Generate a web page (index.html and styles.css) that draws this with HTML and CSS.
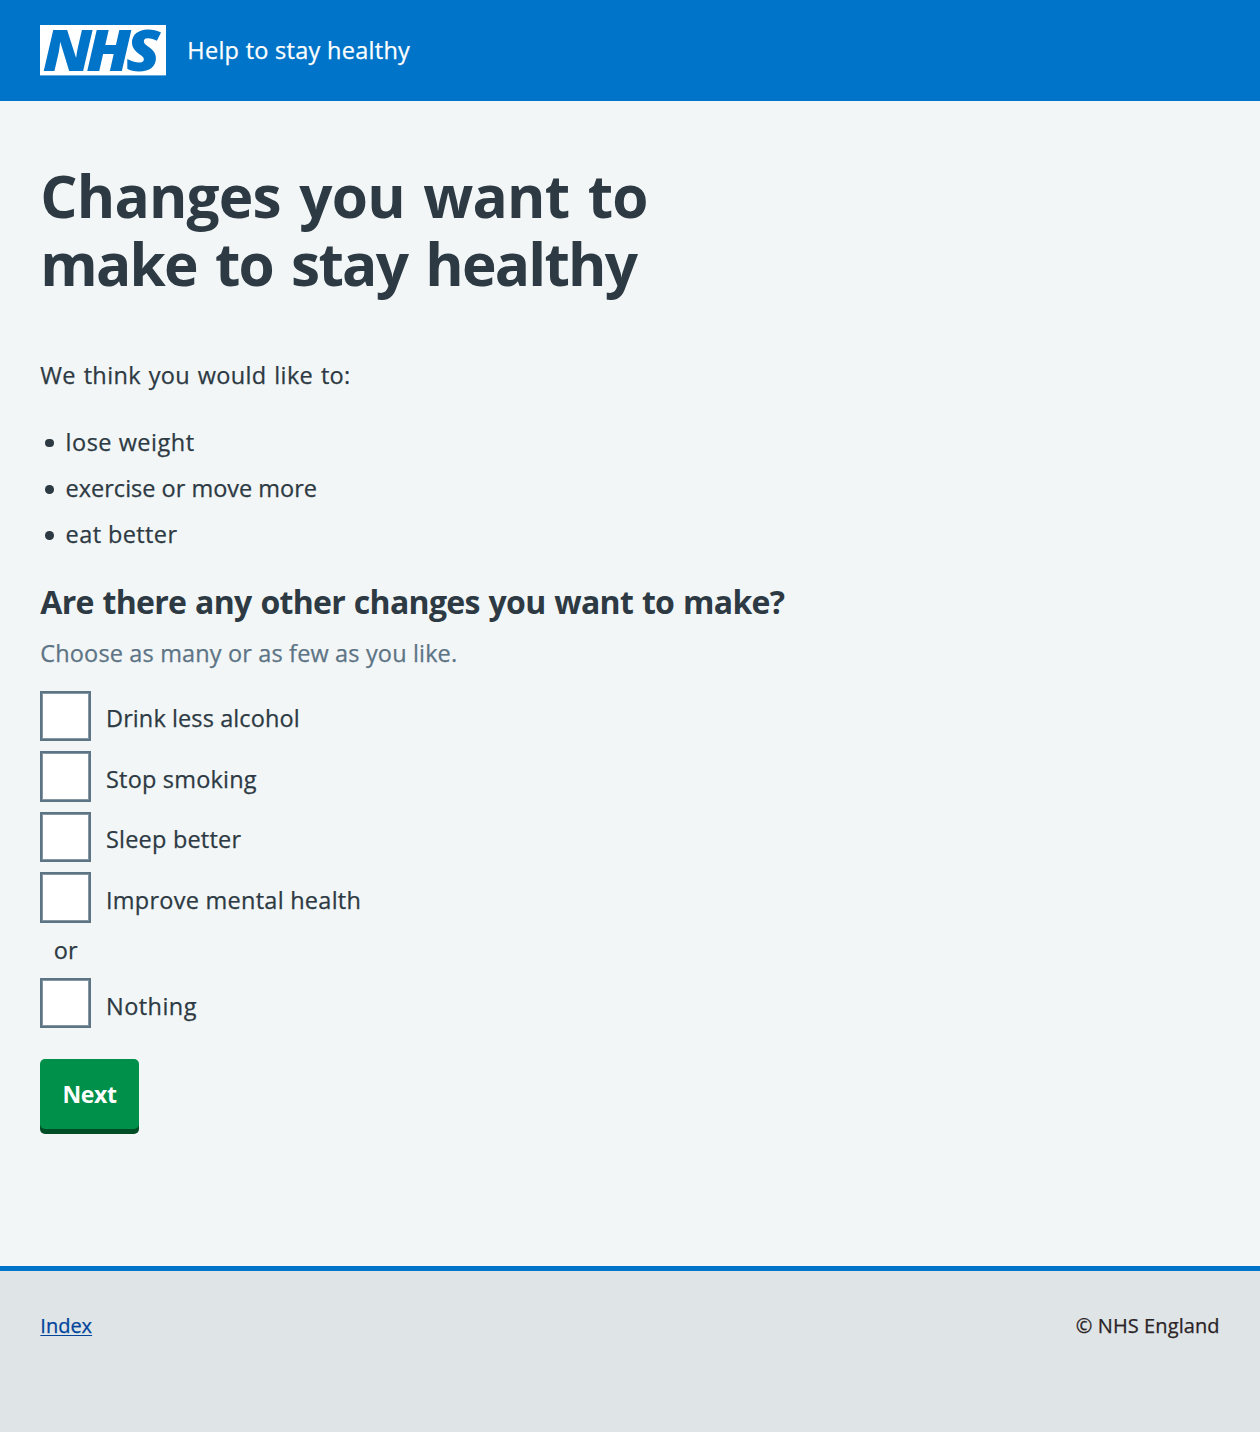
FILE: index.html
```html
<!DOCTYPE html>
<html lang="en">
<head>
<meta charset="utf-8">
<title>Changes you want to make to stay healthy</title>
<link rel="stylesheet" href="styles.css">
</head>
<body>
<header class="header">
  <svg class="logo" viewBox="0 0 126 50.4" role="img" aria-label="NHS">
    <rect width="126" height="50.4" fill="#fff"/>
    <g transform="scale(1.1 1)"><text class="logo-text" x="2.5 42 78.2" y="45.8">NHS</text></g>
  </svg>
  <span class="service">Help to stay healthy</span>
</header>
<main class="main">
  <h1 class="title"><span class="t1">Changes you want to</span><br><span class="t2">make to stay healthy</span></h1>
  <p class="intro">We think you would like to:</p>
  <ul class="list">
    <li><span class="l1">lose weight</span></li>
    <li><span class="l2">exercise or move more</span></li>
    <li><span class="l3">eat better</span></li>
  </ul>
  <form class="form">
    <h2 class="question">Are there any other changes you want to make?</h2>
    <p class="hint">Choose as many or as few as you like.</p>
    <div class="options">
      <label class="option"><input class="box" type="checkbox"><span class="c1">Drink less alcohol</span></label>
      <label class="option"><input class="box" type="checkbox"><span class="c2">Stop smoking</span></label>
      <label class="option"><input class="box" type="checkbox"><span class="c3">Sleep better</span></label>
      <label class="option"><input class="box" type="checkbox"><span class="c4">Improve mental health</span></label>
    </div>
    <p class="or">or</p>
    <label class="option"><input class="box" type="checkbox"><span class="c5">Nothing</span></label>
    <button class="button" type="button">Next</button>
  </form>
</main>
<footer class="footer">
  <a class="link" href="#">Index</a>
  <span class="copyright">© NHS England</span>
</footer>
</body>
</html>
```
FILE: styles.css
```css
* { box-sizing: border-box; }
body {
  margin: 0;
  min-height: 1432px;
  display: flex;
  flex-direction: column;
  background: #f2f6f7;
  color: #2d3a43;
  font: 400 23.5px/36px "Open Sans", "Noto Sans", sans-serif;
  -webkit-text-stroke: 0.25px;
}
h1, h2, p, ul { margin: 0; padding: 0; }
.header {
  height: 100.8px;
  padding: 0 40.3px;
  display: flex;
  align-items: center;
  gap: 21px;
  background: #0074c8;
  color: #fff;
}
.service { letter-spacing: 0.28px; }
.logo { width: 126px; height: 50.4px; overflow: visible; }
.logo-text {
  font: italic 800 57px "Open Sans", sans-serif;
  fill: #0074c8;
  -webkit-text-stroke: 0;
}
.main {
  flex: 1;
  padding: 60.2px 40.3px 0;
}
.title {
  font-size: 58.5px;
  line-height: 68px;
  font-weight: 700;
  -webkit-text-stroke: 0;
}
.t1 { letter-spacing: -0.8px; word-spacing: 4px; }
.t2 { letter-spacing: -1.75px; word-spacing: 4.6px; }
.intro { margin-top: 60px; letter-spacing: 0.35px; word-spacing: 1.3px; }
.list {
  margin-top: 30.6px;
  list-style: none;
  display: flex;
  flex-direction: column;
  gap: 10.3px;
}
.list li {
  display: flex;
  align-items: center;
  gap: 12px;
  padding-left: 4.7px;
}
.list li::before {
  content: "";
  width: 8.6px;
  height: 8.6px;
  margin-top: 3px;
  border-radius: 50%;
  background: #2d3a43;
}
.l1 { letter-spacing: 0.5px; }
.l3 { letter-spacing: 0.4px; }
.question {
  margin-top: 29.8px;
  font-size: 32px;
  line-height: 40px;
  font-weight: 700;
  letter-spacing: -0.7px;
  word-spacing: 1.2px;
  -webkit-text-stroke: 0;
}
.hint { margin-top: 13.5px; color: #5d7485; letter-spacing: 0.15px; }
.options {
  margin-top: 19.3px;
  display: flex;
  flex-direction: column;
  gap: 10.1px;
}
.option {
  height: 50.4px;
  display: flex;
  align-items: center;
  gap: 15.3px;
}
.option span { padding-top: 5px; }
.c1 { letter-spacing: 0.1px; }
.c2, .c3 { letter-spacing: 0.2px; }
.c4 { letter-spacing: 0.26px; }
.c5 { letter-spacing: 0.45px; }
.box {
  appearance: none;
  width: 50.4px;
  height: 50.4px;
  margin: 0;
  border: 2px solid #5d7485;
  box-shadow: inset 0 0 0 1px rgba(93, 116, 133, 0.75);
  background: #fff;
}
.or { margin: 9.5px 0 9.8px 13.5px; }
.button {
  display: block;
  width: 98.4px;
  height: 70.5px;
  margin-top: 30.5px;
  padding: 0;
  border: 0;
  border-radius: 5px;
  background: #00904a;
  box-shadow: 0 5px 0 #004d26;
  color: #fff;
  font: 700 23px/36px "Open Sans", sans-serif;
  letter-spacing: -0.4px;
  -webkit-text-stroke: 0;
}
.footer {
  height: 166.3px;
  padding: 40.5px 40.3px 0;
  border-top: 5px solid #0074c8;
  display: flex;
  justify-content: space-between;
  background: #dfe4e6;
  font-size: 20px;
  line-height: 30px;
}
.link { color: #00449c; text-underline-offset: 2px; text-decoration-thickness: 1px; }
.copyright { color: #2a2326; letter-spacing: 0.1px; }
```
